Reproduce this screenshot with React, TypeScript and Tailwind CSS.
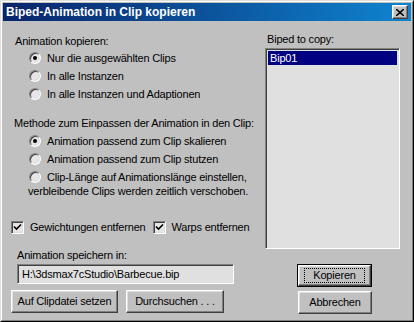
import React from "react";

const raised =
  "border border-t-white border-l-white border-r-[#404040] border-b-[#404040] shadow-[inset_-1px_-1px_0_#808080,inset_1px_1px_0_#dfdfdf]";
const sunken =
  "border border-t-[#808080] border-l-[#808080] border-r-white border-b-white shadow-[inset_1px_1px_0_#404040,inset_-1px_-1px_0_#dfdfdf]";

function Radio({ checked }: { checked?: boolean }) {
  return (
    <span
      className={`flex shrink-0 items-center justify-center w-[12px] h-[12px] rounded-full bg-[#e6e6e6] ${sunken}`}
    >
      {checked && <span className="w-[4px] h-[4px] rounded-full bg-black" />}
    </span>
  );
}

function Checkbox() {
  return (
    <span className={`flex shrink-0 items-center justify-center w-[13px] h-[13px] bg-[#e6e6e6] ${sunken}`}>
      <svg width="9" height="9" viewBox="0 0 9 9">
        <path d="M1 3.5 L3.5 6 L8 1.5" stroke="black" strokeWidth="1.6" fill="none" />
      </svg>
    </span>
  );
}

function RadioRow({ label, checked }: { label: string; checked?: boolean }) {
  return (
    <div className="flex items-center h-[18px] pl-[26px]">
      <Radio checked={checked} />
      <span className="ml-[6px]">{label}</span>
    </div>
  );
}

function Button({ label, className }: { label: string; className: string }) {
  return (
    <div className={`flex items-center justify-center h-[23px] bg-[#c0c0c0] ${raised} ${className}`}>
      {label}
    </div>
  );
}

export default function App() {
  return (
    <div className="w-[414px] h-[322px] overflow-hidden whitespace-nowrap bg-[#c0c0c0] border border-t-[#dfdfdf] border-l-[#dfdfdf] border-r-black border-b-black font-['Liberation_Sans',Arial,sans-serif] text-[11px] leading-[13px] tracking-[-0.2px] text-black">
      <div className="flex flex-col h-full border border-t-white border-l-white border-r-[#808080] border-b-[#808080] p-px">
        <div className="flex items-center justify-between h-[18px] pl-[3px] pr-[3px] bg-gradient-to-r from-[#0a246a] to-[#1084d0]">
          <span className="font-bold text-white text-[12px] tracking-normal">Biped-Animation in Clip kopieren</span>
          <div className={`flex items-center justify-center w-[16px] h-[14px] bg-[#c0c0c0] ${raised}`}>
            <svg width="8" height="7" viewBox="0 0 8 7">
              <path d="M0 0 L8 7 M8 0 L0 7" stroke="black" strokeWidth="1.6" />
            </svg>
          </div>
        </div>

        <div className="flex flex-1">
          {/* left column */}
          <div className="flex flex-col w-[259px] shrink-0">
            <div className="mt-[14px] pl-[12px]">Animation kopieren:</div>
            <div className="mt-[1px]">
              <RadioRow label="Nur die ausgewählten Clips" checked />
              <RadioRow label="In alle Instanzen" />
              <RadioRow label="In alle Instanzen und Adaptionen" />
            </div>

            <div className="mt-[14px] pl-[11px]">Methode zum Einpassen der Animation in den Clip:</div>
            <div className="mt-[2px]">
              <RadioRow label="Animation passend zum Clip skalieren" checked />
              <RadioRow label="Animation passend zum Clip stutzen" />
              <div className="flex items-center h-[14px] mt-[2px] pl-[26px]">
                <Radio />
                <span className="ml-[6px]">Clip-Länge auf Animationslänge einstellen,</span>
              </div>
              <div className="h-[14px] pl-[25px] flex items-center">
                verbleibende Clips werden zeitlich verschoben.
              </div>
            </div>

            <div className="flex items-center h-[14px] mt-[22px] pl-[8px]">
              <Checkbox />
              <span className="ml-[6px]">Gewichtungen entfernen</span>
              <span className="ml-[8px]">
                <Checkbox />
              </span>
              <span className="ml-[5px]">Warps entfernen</span>
            </div>

            <div className="mt-[15px] pl-[14px]">Animation speichern in:</div>
            <div
              className={`flex items-center ml-[14px] mt-[2px] w-[217px] h-[20px] pl-[4px] bg-[#e0e0e0] ${sunken}`}
            >
              H:\3dsmax7cStudio\Barbecue.bip
            </div>
            <div className="flex mt-[6px] pl-[8px] gap-[8px]">
              <Button label="Auf Clipdatei setzen" className="w-[107px]" />
              <Button label="Durchsuchen . . ." className="w-[98px]" />
            </div>
          </div>

          {/* right column */}
          <div className="flex flex-col">
            <div className="mt-[12px] pl-[5px]">Biped to copy:</div>
            <div className={`mt-[2px] ml-[3px] w-[135px] h-[201px] bg-[#e0e0e0] p-[2px] ${sunken}`}>
              <div className="h-[14px] bg-[#000080] text-white pl-[2px] flex items-center">Bip01</div>
            </div>
            <div className="ml-[35px] mt-[15px] w-[75px] h-[23px] border border-black">
              <div className={`flex items-center justify-center h-full bg-[#c0c0c0] ${raised}`}>
                <span className="border border-dotted border-black w-[61px] h-[15px] flex items-center justify-center">
                  Kopieren
                </span>
              </div>
            </div>
            <Button label="Abbrechen" className="ml-[36px] mt-[4px] w-[74px]" />
          </div>
        </div>
      </div>
    </div>
  );
}
